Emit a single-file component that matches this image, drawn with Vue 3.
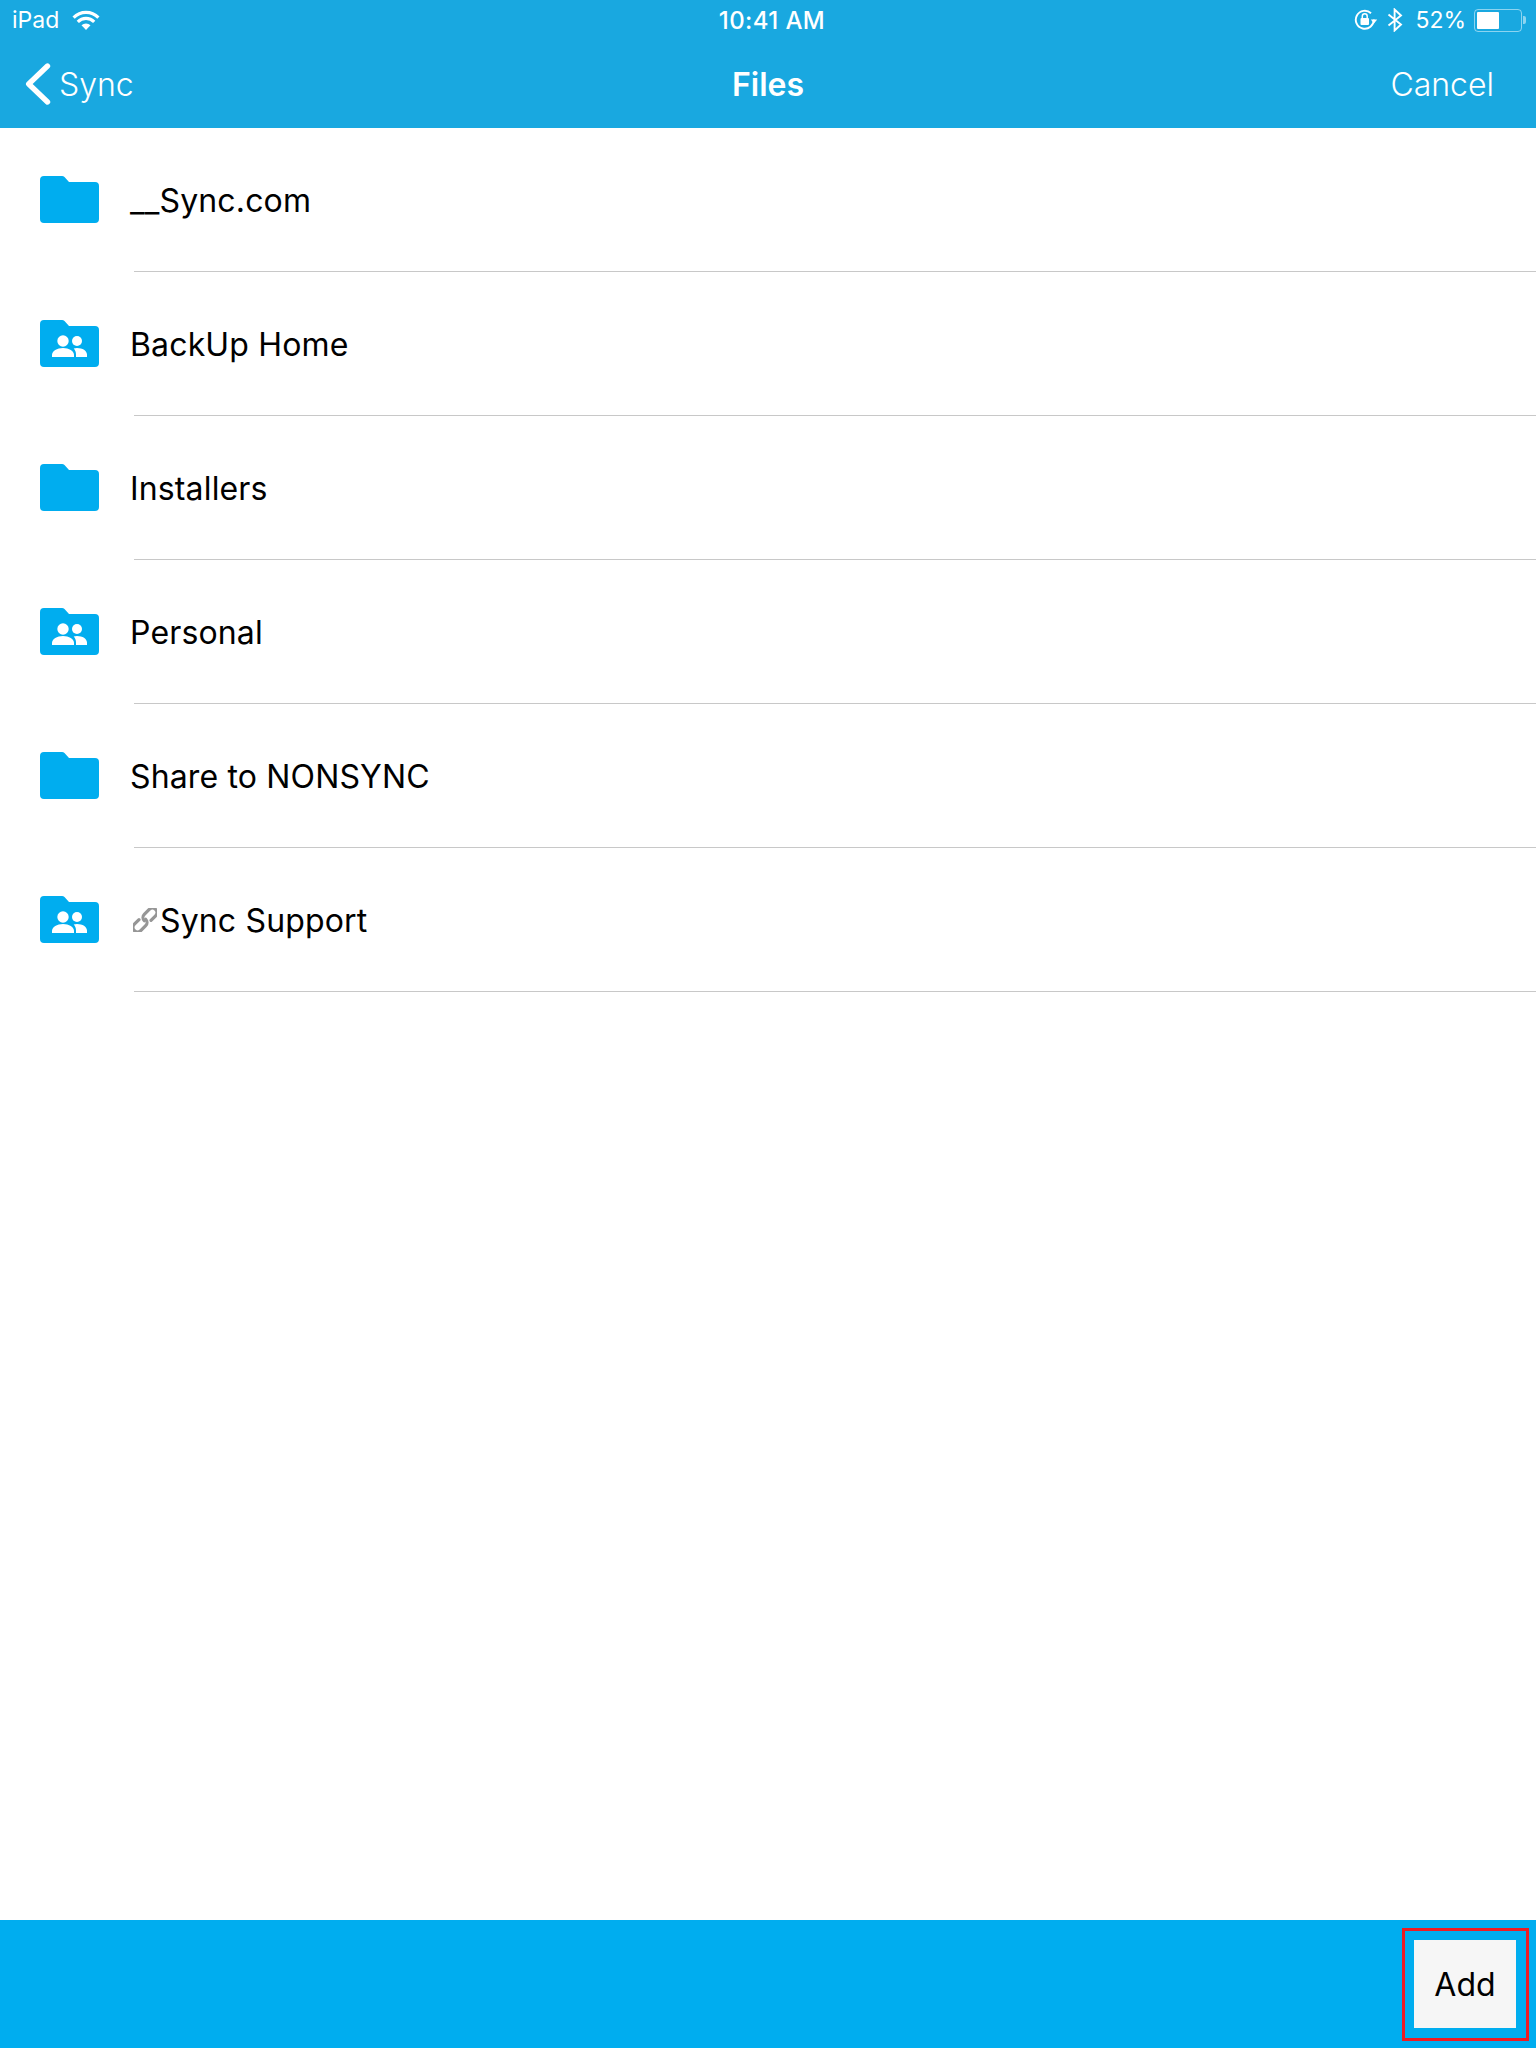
<template>
  <div class="screen">
    <header class="top">
      <div class="status">
        <div class="status-left">
          <span>iPad</span>
          <svg class="wifi" width="28" height="20" viewBox="0 0 28 20">
            <path d="M14 20 9.500 15.200a6.500 6.500 0 0 1 9 0Z" fill="#fff" />
            <path d="M5.800 11.800a11.600 11.600 0 0 1 16.400 0M1.600 7.600a17.500 17.500 0 0 1 24.800 0" fill="none" stroke="#fff" stroke-width="3.200" />
          </svg>
        </div>
        <span class="clock">10:41 AM</span>
        <div class="status-right">
          <svg class="lock" width="24" height="22" viewBox="0 0 24 22">
            <path d="M19.800 10.500a9 9 0 1 1-2.800-6.300" fill="none" stroke="#fff" stroke-width="1.900" />
            <path d="M16.800 10.500h6.400L20 14.400Z" fill="#fff" />
            <rect x="6.500" y="9" width="8.500" height="7" rx="1" fill="#fff" />
            <path d="M8.300 9V7.300a2.450 2.450 0 0 1 4.900 0V9" fill="none" stroke="#fff" stroke-width="1.500" />
          </svg>
          <svg class="bt" width="16" height="24" viewBox="0 0 16 24">
            <path d="M1.500 6.500 14 16.500 7.600 22.500V1.500L14 7.500 1.500 17.500" fill="none" stroke="#fff" stroke-width="1.900" />
          </svg>
          <span class="pct">52%</span>
          <div class="battery">
            <div class="battery-body"><div class="battery-fill" :style="{ width: battery + '%' }"></div></div>
            <div class="battery-tip"></div>
          </div>
        </div>
      </div>
      <nav class="nav">
        <div class="nav-back">
          <svg width="26" height="42" viewBox="0 0 26 42">
            <path d="M22.500 3 3.700 21l18.800 18" fill="none" stroke="#fff" stroke-width="5.400" stroke-linecap="round" stroke-linejoin="round" />
          </svg>
          <span>Sync</span>
        </div>
        <span class="nav-title">Files</span>
        <span class="nav-cancel">Cancel</span>
      </nav>
    </header>

    <main class="list">
      <div v-for="f in folders" :key="f.name" class="row">
        <svg class="folder" width="60" height="47" viewBox="0 0 60 47">
          <path d="M0 4a4 4 0 0 1 4-4h18c1 0 1.800.3 2.500 1L29 6H55a4 4 0 0 1 4 4v33a4 4 0 0 1-4 4H4a4 4 0 0 1-4-4Z" fill="#00adef" />
          <g v-if="f.shared" fill="#fff">
            <circle cx="23" cy="21" r="5.700" />
            <circle cx="37" cy="21" r="5" />
            <path d="M12 37v-2c0-4 5-7 11-7s11 3 11 7v2Z" />
            <path d="M36 37v-2.500c0-2.500-.8-4.500-2.300-6 1-.3 2-.5 3.300-.5 5.500 0 10 2.800 10 6.500V37Z" />
          </g>
        </svg>
        <div class="row-label">
          <svg v-if="f.linked" class="link" width="24" height="24" viewBox="0 0 24 24">
            <g transform="rotate(-45 12 12)" fill="none" stroke="#969696" stroke-width="3.200" stroke-linecap="round">
              <path d="M8 7.500H1.500a4.500 4.500 0 0 0 0 9H8.500a4.500 4.500 0 0 0 4.500-4.500" />
              <path d="M16 16.500H22.500a4.500 4.500 0 0 0 0-9H15.500a4.500 4.500 0 0 0-4.500 4.500" />
            </g>
          </svg>
          <span>{{ f.name }}</span>
        </div>
      </div>
    </main>

    <footer class="bottom">
      <div class="highlight">
        <button class="add">Add</button>
      </div>
    </footer>
  </div>
</template>

<script setup>
const battery = 52;

const folders = [
  { name: "__Sync.com" },
  { name: "BackUp Home", shared: true },
  { name: "Installers" },
  { name: "Personal", shared: true },
  { name: "Share to NONSYNC" },
  { name: "Sync Support", shared: true, linked: true },
];
</script>

<style>
html,
body {
  margin: 0;
  background: #fff;
}
</style>

<style scoped>
.screen {
  width: 1536px;
  height: 2048px;
  display: flex;
  flex-direction: column;
  font-family: Inter, "Liberation Sans", sans-serif;
  background: #fff;
}
.top {
  background: #19a8e0;
  color: #fff;
  height: 128px;
  flex: none;
}
.status {
  height: 40px;
  padding: 0 10px 0 12px;
  display: grid;
  grid-template-columns: 1fr auto 1fr;
  align-items: center;
  font-size: 23px;
  box-sizing: border-box;
}
.status-left {
  display: flex;
  align-items: center;
  gap: 13px;
}
.clock {
  font-size: 24px;
  font-weight: 500;
  letter-spacing: 0.4px;
  margin-left: 6px;
}
.status-right {
  display: flex;
  align-items: center;
  justify-content: flex-end;
  gap: 9px;
}
.pct {
  margin: 0 -1px 0 3px;
}
.battery {
  display: flex;
  align-items: center;
}
.battery-body {
  width: 48px;
  height: 23px;
  border: 1.500px solid rgba(255, 255, 255, 0.5);
  border-radius: 4px;
  box-sizing: border-box;
  padding: 2px;
}
.battery-fill {
  height: 100%;
  background: #fff;
  border-radius: 1px;
}
.battery-tip {
  width: 3px;
  height: 8px;
  margin-left: 1px;
  background: rgba(255, 255, 255, 0.5);
  border-radius: 0 2px 2px 0;
}
.nav {
  height: 88px;
  display: grid;
  grid-template-columns: 1fr auto 1fr;
  align-items: center;
  padding: 0 25px;
  font-size: 32px;
  font-weight: 300;
}
.nav-back {
  display: flex;
  align-items: center;
  gap: 8px;
}
.nav-title {
  font-weight: 600;
}
.nav-cancel {
  text-align: right;
  padding-right: 17px;
}
.list {
  flex: 1;
}
.row {
  height: 144px;
  display: flex;
  align-items: center;
  padding-left: 40px;
  box-sizing: border-box;
  position: relative;
}
.row::after {
  content: "";
  position: absolute;
  left: 134px;
  right: 0;
  bottom: 0;
  height: 1px;
  background: #c8c8c8;
}
.folder {
  flex: none;
  margin-top: -1px;
}
.row-label {
  display: flex;
  align-items: center;
  margin-left: 30px;
  font-size: 32px;
  letter-spacing: 0.15px;
  color: #000;
}
.link {
  margin: 0 3px;
}
.bottom {
  height: 128px;
  flex: none;
  background: #00adef;
  display: flex;
  justify-content: flex-end;
  align-items: flex-start;
  padding: 8px 7px 0 0;
  box-sizing: border-box;
}
.highlight {
  border: 3px solid #ed1c24;
  width: 127px;
  height: 113px;
  box-sizing: border-box;
  padding: 9px 10px 10px 9px;
}
.add {
  width: 100%;
  height: 100%;
  background: #f6f6f6;
  border: 0;
  padding: 0;
  font: inherit;
  font-size: 32px;
  color: #000;
}
</style>
